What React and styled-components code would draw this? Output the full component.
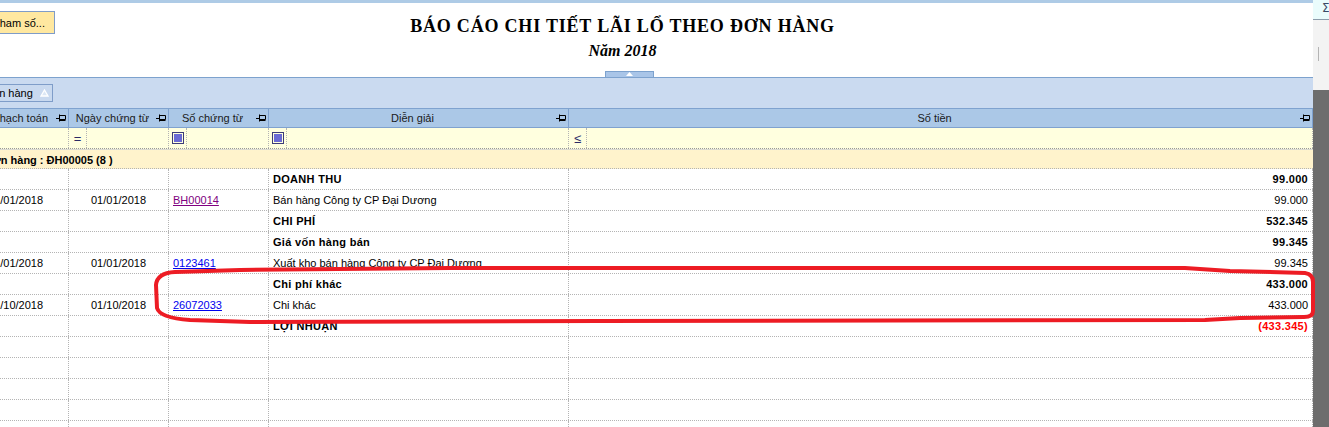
import React from "react";
import styled, { createGlobalStyle } from "styled-components";

const GlobalStyle = createGlobalStyle`
  html, body {
    margin: 0;
    padding: 0;
    background: #fff;
  }
  body {
    font-family: "Liberation Sans", Arial, sans-serif;
    font-size: 11px;
    color: #000;
  }
`;

const COLS = "31px 106px 100px 100px 300px 744px";

const rows = [
  { desc: "DOANH THU", amount: "99.000", bold: true },
  {
    d1: "01/01/2018",
    d2: "01/01/2018",
    no: "BH00014",
    visited: true,
    desc: "Bán hàng Công ty CP Đại Dương",
    amount: "99.000",
  },
  { desc: "CHI PHÍ", amount: "532.345", bold: true },
  { desc: "Giá vốn hàng bán", amount: "99.345", bold: true },
  {
    d1: "01/01/2018",
    d2: "01/01/2018",
    no: "0123461",
    desc: "Xuất kho bán hàng Công ty CP Đại Dương",
    amount: "99.345",
  },
  { desc: "Chi phí khác", amount: "433.000", bold: true },
  {
    d1: "01/10/2018",
    d2: "01/10/2018",
    no: "26072033",
    desc: "Chi khác",
    amount: "433.000",
  },
  { desc: "LỢI NHUẬN", amount: "(433.345)", bold: true, negative: true },
  {},
  {},
  {},
  {},
  {},
];

function Pin() {
  return (
    <svg width="10" height="8" viewBox="0 0 10 8">
      <path
        d="M0 4.5H3.5M3.5 0.5V7.5M3.5 1.5H9.5V5.5H3.5M3.5 6.5H9.5"
        stroke="#000"
        strokeWidth="1"
        fill="none"
      />
    </svg>
  );
}

function SortUp() {
  return (
    <svg width="9" height="8" viewBox="0 0 9 8">
      <polygon
        points="4.5,1 8,7 1,7"
        fill="#dce7f5"
        stroke="#fff"
        strokeWidth="1.3"
      />
    </svg>
  );
}

export default function App() {
  return (
    <>
      <GlobalStyle />
      <Viewport>
        <Page>
          <Main>
            <ReportHeader>
              <TopLine>
                <ParamButton>Tham số...</ParamButton>
                <TitleBlock>
                  <Title>BÁO CÁO CHI TIẾT LÃI LỔ THEO ĐƠN HÀNG</Title>
                  <Subtitle>Năm 2018</Subtitle>
                </TitleBlock>
              </TopLine>
              <CollapseTab>
                <svg width="7" height="4" viewBox="0 0 7 4">
                  <polygon points="3.5,0 7,4 0,4" fill="#fff" />
                </svg>
              </CollapseTab>
            </ReportHeader>

            <GroupPanel>
              <GroupChip>
                Đơn hàng
                <SortUp />
              </GroupChip>
            </GroupPanel>

            <HeaderRow>
              <HeadCell />
              <HeadCell>
                <HeadLabel>Ngày hạch toán</HeadLabel>
                <Pin />
              </HeadCell>
              <HeadCell>
                <HeadLabel>Ngày chứng từ</HeadLabel>
                <Pin />
              </HeadCell>
              <HeadCell>
                <HeadLabel>Số chứng từ</HeadLabel>
                <Pin />
              </HeadCell>
              <HeadCell>
                <HeadLabel>Diễn giải</HeadLabel>
                <Pin />
              </HeadCell>
              <HeadCell>
                <HeadLabel>Số tiền</HeadLabel>
                <Pin />
              </HeadCell>
            </HeaderRow>

            <FilterRow>
              <FilterCell $plain />
              <FilterCell>
                <Op />
              </FilterCell>
              <FilterCell>
                <Op>=</Op>
              </FilterCell>
              <FilterCell>
                <Op>
                  <CheckMark />
                </Op>
              </FilterCell>
              <FilterCell>
                <Op>
                  <CheckMark />
                </Op>
              </FilterCell>
              <FilterCell>
                <Op>≤</Op>
              </FilterCell>
            </FilterRow>

            <GroupRow>Đơn hàng : ĐH00005 (8 )</GroupRow>

            {rows.map((r, i) => (
              <DataRow key={i}>
                <Cell $indent />
                <Cell $align="center">{r.d1}</Cell>
                <Cell $align="center">{r.d2}</Cell>
                <Cell>
                  {r.no && <DocLink $visited={r.visited}>{r.no}</DocLink>}
                </Cell>
                <Cell $bold={r.bold}>{r.desc}</Cell>
                <Cell $align="right" $bold={r.bold} $negative={r.negative}>
                  {r.amount}
                </Cell>
              </DataRow>
            ))}
          </Main>

          <SidePanel>
            <SumBar>Σ</SumBar>
            <ToolArea>
              <ToolTick />
            </ToolArea>
            <DarkArea />
          </SidePanel>
        </Page>

        <Annotation width="1329" height="427" viewBox="0 0 1329 427">
          <path
            d="M175 272 L240 270 L450 268 L900 268 L1185 268 L1230 271 L1305 273 Q1313 274 1313 282 L1313 311 Q1313 317 1304 317 L1240 318 L1205 320 L600 321 L250 322 L190 320 Q160 318 157 308 L156 285 Q157 273 175 272 Z"
            stroke="#ed1c24"
            strokeWidth="4"
            strokeLinejoin="round"
            fill="none"
          />
        </Annotation>
      </Viewport>
    </>
  );
}

const Viewport = styled.div`
  position: relative;
  width: 1329px;
  height: 427px;
  overflow: hidden;
`;

const Page = styled.div`
  display: flex;
  align-items: flex-start;
  margin-left: -68px;
  height: 100%;
`;

const Main = styled.div`
  flex: none;
  width: 1381px;
  border-top: 3px solid #aecbe6;
`;

const ReportHeader = styled.div`
  height: 74px;
  display: flex;
  flex-direction: column;
  background: #fff;
`;

const TopLine = styled.div`
  display: grid;
  grid-template-columns: 1fr auto 1fr;
  align-items: start;
  padding-top: 8px;
`;

const ParamButton = styled.div`
  justify-self: start;
  margin-left: 52px;
  height: 23px;
  box-sizing: border-box;
  display: flex;
  align-items: center;
  padding: 0 9px 0 8px;
  background: #ffe8a0;
  border: 1px solid #7f9cc8;
  font-size: 11px;
  color: #000;
`;

const TitleBlock = styled.div`
  padding-top: 4px;
  text-align: center;
  font-family: "Liberation Serif", "Times New Roman", serif;
  color: #000;
`;

const Title = styled.div`
  font-size: 18px;
  line-height: 22px;
  font-weight: bold;
  letter-spacing: 0.8px;
`;

const Subtitle = styled.div`
  margin-top: 4px;
  font-size: 16px;
  line-height: 20px;
  font-weight: bold;
  font-style: italic;
`;

const CollapseTab = styled.div`
  margin-top: auto;
  align-self: center;
  margin-left: 14px;
  width: 49px;
  height: 6px;
  box-sizing: border-box;
  border: 1px solid #7da2ce;
  border-bottom: none;
  background: #a9c5e8;
  display: flex;
  justify-content: center;
  align-items: flex-start;
  svg {
    display: block;
  }
`;

const GroupPanel = styled.div`
  height: 31px;
  box-sizing: border-box;
  border-top: 1px solid #7da2ce;
  background: #cadaf0;
  padding-top: 6px;
`;

const GroupChip = styled.div`
  margin-left: 47px;
  display: inline-flex;
  align-items: center;
  gap: 7px;
  height: 18px;
  box-sizing: border-box;
  padding: 0 3px 0 4px;
  border: 1px solid #7f9dc9;
  background: #c9d9ef;
  font-size: 11px;
  color: #000;
`;

const HeaderRow = styled.div`
  display: grid;
  grid-template-columns: ${COLS};
  height: 20px;
  box-sizing: border-box;
  border-top: 1px solid #7fa2cf;
  border-bottom: 1px solid #7fa2cf;
  background: #abc8e7;
`;

const HeadCell = styled.div`
  display: flex;
  align-items: center;
  padding-right: 2px;
  border-right: 1px solid #7fa2cf;
  color: #1a1a1a;
  font-size: 11px;
  overflow: hidden;
  white-space: nowrap;
  svg {
    flex: none;
  }
`;

const HeadLabel = styled.span`
  flex: 1;
  text-align: center;
`;

const FilterRow = styled.div`
  display: grid;
  grid-template-columns: ${COLS};
  height: 21px;
  box-sizing: border-box;
  background: #ffffdf;
  border-bottom: 1px dotted #999;
  box-shadow: 0 1px 0 #d9d9d0;
  position: relative;
`;

const FilterCell = styled.div`
  display: flex;
  border-right: ${(p) => (p.$plain ? "none" : "1px dotted #b4b4b4")};
`;

const Op = styled.div`
  width: 18px;
  box-sizing: border-box;
  border-right: 1px dotted #b4b4b4;
  display: flex;
  align-items: center;
  justify-content: center;
  color: #2b2b66;
  font-size: 13px;
`;

const CheckMark = styled.span`
  display: block;
  width: 12px;
  height: 12px;
  box-sizing: border-box;
  border: 1px solid #3c3c78;
  padding: 1px;
  background: #6b6bd4;
  background-clip: content-box;
`;

const GroupRow = styled.div`
  height: 19px;
  margin-top: 1px;
  box-sizing: border-box;
  padding: 2px 0 0 53px;
  display: flex;
  align-items: center;
  background: #fff3cc;
  border-bottom: 1px dotted #b4b4b4;
  font-weight: bold;
  font-size: 11px;
  white-space: nowrap;
`;

const DataRow = styled.div`
  display: grid;
  grid-template-columns: ${COLS};
  height: 21px;
  box-sizing: border-box;
  border-bottom: 1px dotted #b4b4b4;
  background: #fff;
`;

const Cell = styled.div`
  display: flex;
  align-items: center;
  justify-content: ${(p) =>
    p.$align === "center"
      ? "center"
      : p.$align === "right"
      ? "flex-end"
      : "flex-start"};
  padding: 0 4px;
  border-right: ${(p) => (p.$indent ? "none" : "1px dotted #b4b4b4")};
  font-size: 11px;
  font-weight: ${(p) => (p.$bold ? "bold" : "normal")};
  letter-spacing: ${(p) => (p.$bold ? "0.3px" : "0")};
  color: ${(p) => (p.$negative ? "#ff0000" : "#000")};
  white-space: nowrap;
  overflow: hidden;
`;

const DocLink = styled.a`
  color: ${(p) => (p.$visited ? "#800080" : "#0000ee")};
  text-decoration: underline;
  cursor: pointer;
`;

const SidePanel = styled.div`
  flex: none;
  width: 20px;
  height: 100%;
  display: flex;
  flex-direction: column;
`;

const SumBar = styled.div`
  height: 20px;
  flex: none;
  box-sizing: border-box;
  border-bottom: 1px solid #8c9cab;
  background: #eafcfc;
  padding: 1px 0 0 9px;
  font-family: "DejaVu Sans", sans-serif;
  font-size: 12px;
  color: #3a4a66;
`;

const ToolArea = styled.div`
  height: 70px;
  flex: none;
  background: #f3f3f3;
  padding: 27px 0 0 5px;
  box-sizing: border-box;
`;

const ToolTick = styled.div`
  width: 1px;
  height: 14px;
  background: #b4b4b4;
`;

const DarkArea = styled.div`
  flex: 1;
  background: #6d6d6d;
`;

const Annotation = styled.svg`
  position: absolute;
  left: 0;
  top: 0;
  pointer-events: none;
`;
